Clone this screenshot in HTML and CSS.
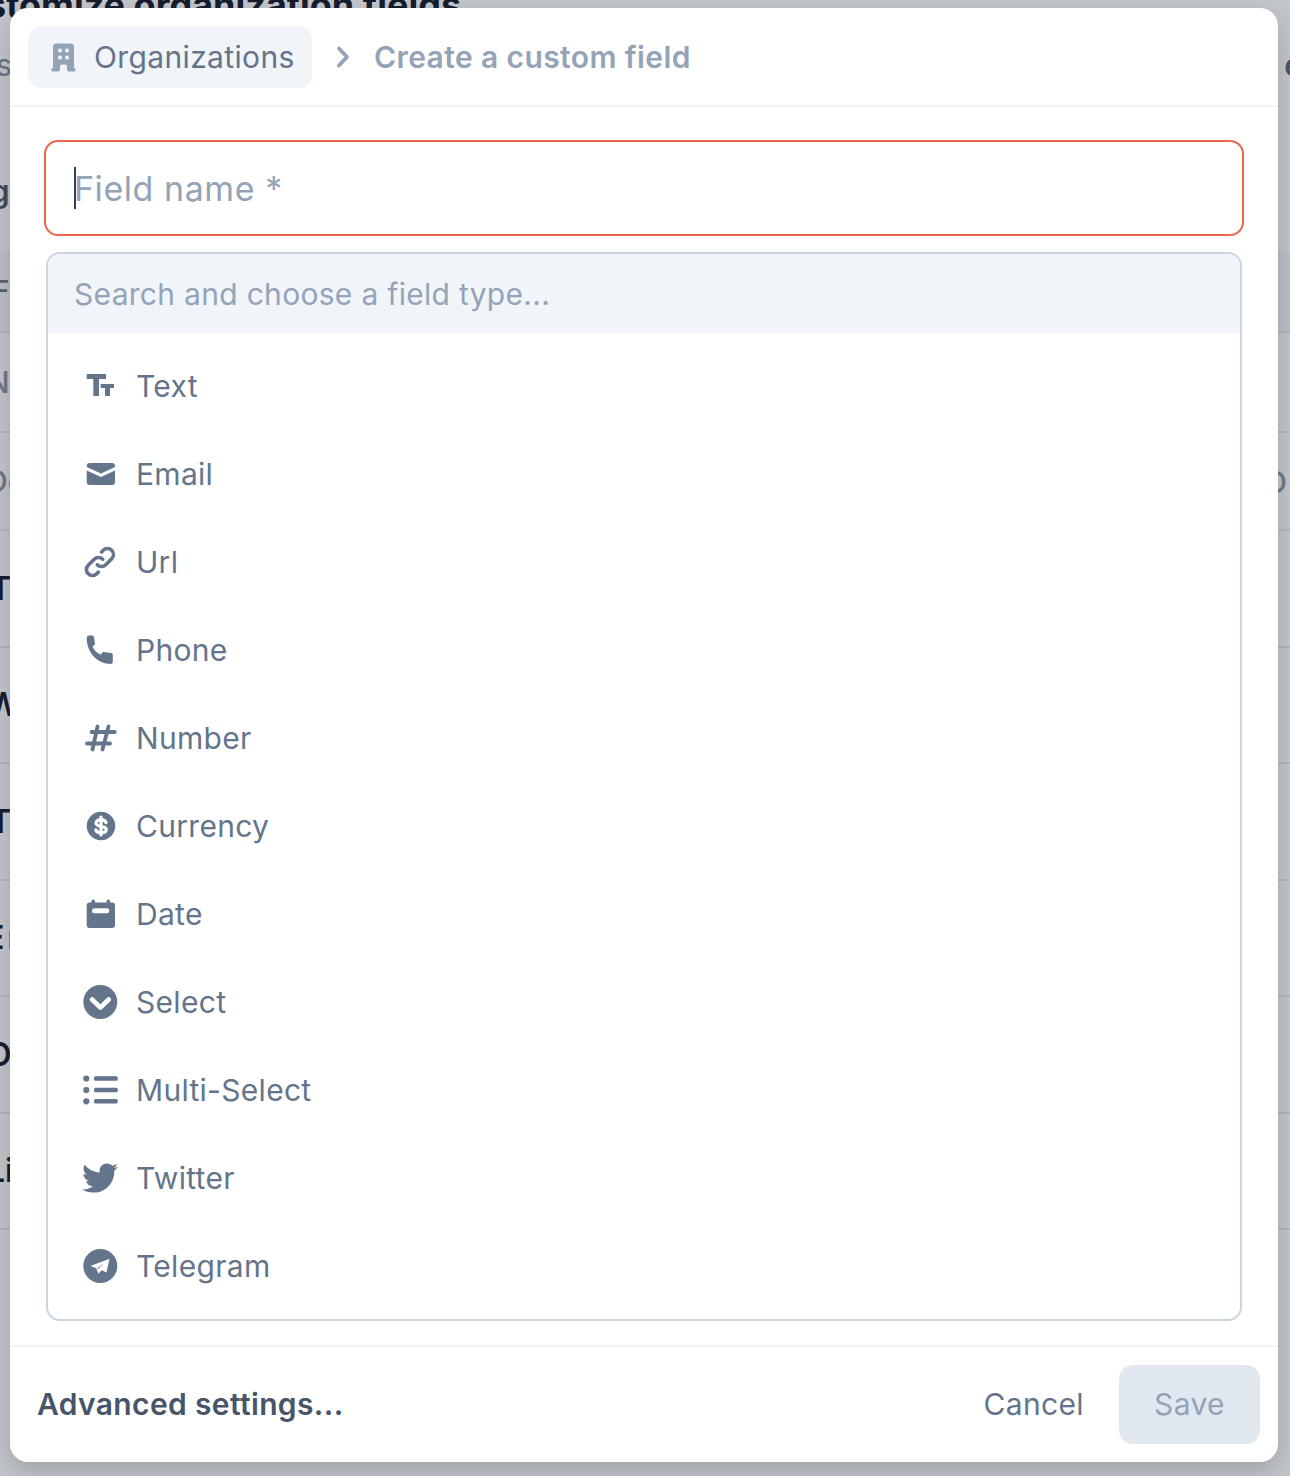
FILE: index.html
```html
<!DOCTYPE html>
<html lang="en">
<head>
<meta charset="utf-8">
<title>Create a custom field</title>
<link rel="stylesheet" href="styles.css">
</head>
<body>
<div class="page">
  <h1 class="title">Customize organization fields</h1>
  <div class="bg-row sub"><span>Fields</span><span class="right dark">e</span></div>
  <div class="spacer"></div>
  <div class="bg-row heading"><span>Organizing</span></div>
  <div class="bg-row thead line"><span>Field</span></div>
  <div class="bg-row muted line"><span>Name</span></div>
  <div class="bg-row muted line"><span>Domain</span><span class="right muted-right">O</span></div>
  <div class="bg-row shift-t line"><span>Twitter</span></div>
  <div class="bg-row line"><span>Website</span></div>
  <div class="bg-row shift-t line"><span>Telegram</span></div>
  <div class="bg-row shift-e line"><span>Email</span></div>
  <div class="bg-row line"><span>Owner</span></div>
  <div class="bg-row line"><span>Linked</span></div>
</div>

<div class="modal">
  <header class="modal-head">
    <div class="crumb-pill">
      <svg class="crumb-icon" viewBox="0 0 20 20"><path fill-rule="evenodd" d="M4 4a2 2 0 012-2h8a2 2 0 012 2v12a1 1 0 110 2h-3a1 1 0 01-1-1v-2a1 1 0 00-1-1H9a1 1 0 00-1 1v2a1 1 0 01-1 1H4a1 1 0 110-2V4zm3 1h2v2H7V5zm2 4H7v2h2V9zm2-4h2v2h-2V5zm2 4h-2v2h2V9z"/></svg>
      <span>Organizations</span>
    </div>
    <svg class="crumb-sep" viewBox="0 0 16 24"><path d="M3 3.500l8 8.500-8 8.500"/></svg>
    <span class="crumb-current">Create a custom field</span>
  </header>

  <div class="modal-body">
    <div class="name-input"><span class="caret"></span><span>Field name *</span></div>
    <div class="type-box">
      <div class="type-search">Search and choose a field type...</div>
      <ul class="type-list">
        <li class="type-item"><svg class="ti" viewBox="0 0 36 36"><path d="M4.700 6h19.300v5h-7v17h-5.700V11H4.700zM18.700 16H32v4h-4v8h-5v-8h-4.300z"/></svg>Text</li>
        <li class="type-item"><svg class="ti" viewBox="0 0 36 36"><path d="M4.700 10a3 3 0 0 1 3-3h22.300a3 3 0 0 1 3 3v1L19 17.500 4.700 11zM4.700 14.500L19 21l14-6.500V26a3 3 0 0 1-3 3H7.700a3 3 0 0 1-3-3z"/></svg>Email</li>
        <li class="type-item"><svg class="ti stroke" viewBox="0 0 24 24"><path stroke-width="2.400" d="M13.828 10.172a4 4 0 00-5.656 0l-4 4a4 4 0 105.656 5.656l1.102-1.101m-.758-4.899a4 4 0 005.656 0l4-4a4 4 0 00-5.656-5.656l-1.100 1.100"/></svg>Url</li>
        <li class="type-item"><svg class="ti" viewBox="0 0 36 36"><path d="M7 3.500h3a2 2 0 0 1 2 1.700l1 6a2 2 0 0 1-1 2l-1.500 1c1.500 4 4.500 7 8.500 8.500l1-1.600a2 2 0 0 1 2-1l7 1a2 2 0 0 1 1.800 2v6.400a2.500 2.500 0 0 1-2.500 2.500H29C15 32 4.700 20 4.700 6A2.500 2.500 0 0 1 7 3.500z"/></svg>Phone</li>
        <li class="type-item"><svg class="ti stroke" viewBox="0 0 36 36"><path stroke-width="3.800" d="M15.500 6.500L10.500 29.500M26.500 6.500L20.500 29.500M9.700 12h23M5 23.500h23"/></svg>Number</li>
        <li class="type-item"><svg class="ti" viewBox="0 0 36 36"><circle cx="19" cy="18" r="14.300"/><path class="white-line" d="M24 14.500c-1-2-3-2.800-5-2.800-2.800 0-5 1.300-5 3.400 0 4.800 10.200 1.900 10.200 6.400 0 2.100-2.300 3.300-5.200 3.300-2.300 0-4.300-.9-5.200-2.800M19 9v18"/></svg>Currency</li>
        <li class="type-item"><svg class="ti" viewBox="0 0 36 36"><rect x="9.500" y="3.500" width="3.500" height="7" rx="1.700"/><rect x="24.500" y="3.500" width="3.500" height="7" rx="1.700"/><rect x="4.700" y="6.500" width="28.300" height="25.500" rx="3"/><rect class="white-fill" x="10" y="12.300" width="17.300" height="5" rx="2.500"/></svg>Date</li>
        <li class="type-item"><svg class="ti" viewBox="0 0 36 36"><circle cx="18.300" cy="18" r="17"/><path class="white-line thick" d="M10 15.500l8.400 8 8.400-8"/></svg>Select</li>
        <li class="type-item"><svg class="ti" viewBox="0 0 36 36"><circle cx="4.300" cy="6.500" r="3.100"/><circle cx="4.300" cy="18" r="3.100"/><circle cx="4.300" cy="29.300" r="3.100"/><rect x="12" y="4.300" width="23.700" height="4.400" rx="1.500"/><rect x="12" y="15.800" width="23.700" height="4.400" rx="1.500"/><rect x="12" y="27.100" width="23.700" height="4.400" rx="1.500"/></svg>Multi-Select</li>
        <li class="type-item"><svg class="ti" viewBox="0 0 512 512"><path d="M459.370 151.716c.325 4.548.325 9.097.325 13.645 0 138.720-105.583 298.558-298.558 298.558-59.452 0-114.680-17.219-161.137-47.106 8.447.974 16.568 1.299 25.340 1.299 49.055 0 94.213-16.568 130.274-44.832-46.132-.975-84.792-31.188-98.112-72.772 6.498.974 12.995 1.624 19.818 1.624 9.421 0 18.843-1.300 27.614-3.573-48.081-9.747-84.143-51.980-84.143-102.985v-1.299c13.969 7.797 30.214 12.670 47.431 13.319-28.264-18.843-46.781-51.005-46.781-87.391 0-19.492 5.197-37.360 14.294-52.954 51.655 63.675 129.300 105.258 216.365 109.807-1.624-7.797-2.599-15.918-2.599-24.040 0-57.828 46.782-104.934 104.934-104.934 30.213 0 57.502 12.670 76.670 33.137 23.715-4.548 46.456-13.320 66.599-25.340-7.798 24.366-24.366 44.833-46.132 57.827 21.117-2.273 41.584-8.122 60.426-16.243-14.292 20.791-32.161 39.308-52.628 54.253z"/></svg>Twitter</li>
        <li class="type-item"><svg class="ti" viewBox="0 0 36 36"><circle cx="18.300" cy="18" r="17"/><path class="white-fill" d="M27.500 10.800L8.500 18l5.700 2.300 2.200 5.500 3.300-3.500 4.700 2.300z"/><path class="slit" d="M14.500 20.300l8-5.300-5.800 6.200"/></svg>Telegram</li>
      </ul>
    </div>
  </div>

  <footer class="modal-foot">
    <span class="advanced">Advanced settings...</span>
    <div class="foot-actions">
      <span class="cancel">Cancel</span>
      <span class="save"><span class="save-label">Save</span></span>
    </div>
  </footer>
</div>
</body>
</html>
```

FILE: styles.css
```css
* { box-sizing: border-box; }
html, body { margin: 0; padding: 0; }
body {
  width: 1290px;
  height: 1476px;
  overflow: hidden;
  position: relative;
  background: #c3c6cb;
  font-family: Inter, "Liberation Sans", sans-serif;
}

/* dimmed page behind the dialog */
.page {
  display: flex;
  flex-direction: column;
  height: 1476px;
}
.title {
  margin: 0 0 0 -63px;
  height: 24px;
  font-size: 36px;
  line-height: 10px;
  font-weight: 700;
  color: #171c2c;
  white-space: nowrap;
}
.bg-row {
  display: flex;
  justify-content: space-between;
  align-items: center;
  flex: none;
  height: 116.500px;
  margin-left: -13px;
  margin-right: -9px;
  font-size: 32px;
  font-weight: 600;
  color: #171c2c;
  border-bottom: 2px solid #b4b7be;
}
.bg-row.shift-t { margin-left: -10px; }
.bg-row.shift-e { margin-left: -15px; letter-spacing: 3px; }
.bg-row.sub {
  height: 82px;
  border: 0;
  margin-left: -72px;
  font-weight: 400;
  color: #6b7280;
  font-size: 30px;
}
.right.dark { margin-right: -3px; color: #475569; font-weight: 600; }
.spacer { height: 25px; flex: none; }
.bg-row.heading {
  height: 120px;
  border: 0;
  margin-left: -149px;
  color: #3f4859;
  font-size: 30px;
}
.bg-row.thead {
  height: 82px;
  background: #bcbfc6;
  margin-left: -7px;
  font-size: 28px;
  font-weight: 500;
  color: #59606f;
}
.bg-row.muted {
  height: 100px;
  margin-left: -13px;
  font-weight: 500;
  font-size: 30px;
  color: #6f7787;
}
.bg-row.muted + .bg-row.muted { height: 98px; margin-left: -14px; }
.muted-right { margin-right: 12px; margin-top: 2px; color: #6f7787; }

/* dialog */
.modal {
  position: absolute;
  left: 10px;
  top: 8px;
  width: 1268px;
  height: 1454px;
  display: flex;
  flex-direction: column;
  background: #fff;
  border-radius: 18px;
  box-shadow: 0 10px 24px rgba(30, 35, 45, .22);
  letter-spacing: .36px;
}
.modal-head {
  height: 99px;
  flex: none;
  display: flex;
  align-items: center;
  padding: 0 18px;
  border-bottom: 2px solid #f1f5f9;
}
.crumb-pill {
  display: flex;
  align-items: center;
  height: 62px;
  margin-top: 1px;
  width: 284px;
  padding-left: 18px;
  gap: 13px;
  background: #f1f5f9;
  border-radius: 14px;
  font-size: 30px;
  color: #64748b;
}
.crumb-icon { width: 35px; height: 35px; fill: #94a3b8; flex: none; }
.crumb-sep {
  width: 16px;
  height: 24px;
  margin: 0 22px 0 24px;
  fill: none;
  stroke: #94a3b8;
  stroke-width: 3.800;
  stroke-linecap: round;
  stroke-linejoin: round;
  flex: none;
}
.crumb-current {
  font-size: 30px;
  font-weight: 600;
  letter-spacing: .4px;
  color: #94a3b8;
}

.modal-body {
  flex: 1;
  display: flex;
  flex-direction: column;
  padding: 33px 34px 24px;
}
.name-input {
  height: 96px;
  flex: none;
  display: flex;
  align-items: center;
  padding-left: 28px;
  border: 2px solid #e9674a;
  border-radius: 14px;
  font-size: 34px;
  letter-spacing: .55px;
  color: #94a3b8;
}
.caret {
  width: 2px;
  height: 42px;
  margin-right: -2px;
  background: #334155;
  flex: none;
}
.type-box {
  margin: 16px 2px 0;
  height: 1069px;
  flex: none;
  border: 2px solid #cbd5e1;
  border-radius: 14px;
  overflow: hidden;
}
.type-search {
  height: 79px;
  display: flex;
  align-items: center;
  padding-left: 26px;
  background: #f1f5f9;
  font-size: 30px;
  letter-spacing: .3px;
  color: #94a3b8;
}
.type-list {
  list-style: none;
  margin: 0;
  padding: 9px 0 0;
}
.type-item {
  height: 88px;
  display: flex;
  align-items: center;
  gap: 18px;
  padding-left: 34px;
  font-size: 30px;
  letter-spacing: .3px;
  color: #64748b;
}
.ti {
  width: 36px;
  height: 36px;
  flex: none;
  fill: #64748b;
}
.ti.stroke {
  fill: none;
  stroke: #64748b;
  stroke-linecap: round;
  stroke-linejoin: round;
}
.white-line {
  fill: none;
  stroke: #fff;
  stroke-width: 3.200;
  stroke-linecap: round;
  stroke-linejoin: round;
}
.white-line.thick { stroke-width: 4.600; }
.white-fill { fill: #fff; }
.slit {
  fill: #64748b;
  fill-opacity: .55;
}

.modal-foot {
  height: 117px;
  flex: none;
  display: flex;
  align-items: center;
  justify-content: space-between;
  padding: 0 18px 0 27px;
  border-top: 2px solid #f1f5f9;
}
.advanced {
  margin-top: -2px;
  font-size: 30px;
  font-weight: 600;
  color: #475569;
}
.foot-actions {
  display: flex;
  align-items: center;
  gap: 35px;
  font-size: 30px;
}
.cancel { margin-top: -2px; color: #64748b; }
.save {
  display: flex;
  align-items: center;
  justify-content: center;
  width: 141px;
  height: 79px;
  background: #e2e8f0;
  border-radius: 14px;
  color: #94a3b8;
}
.save-label { margin-top: -2px; }
```
